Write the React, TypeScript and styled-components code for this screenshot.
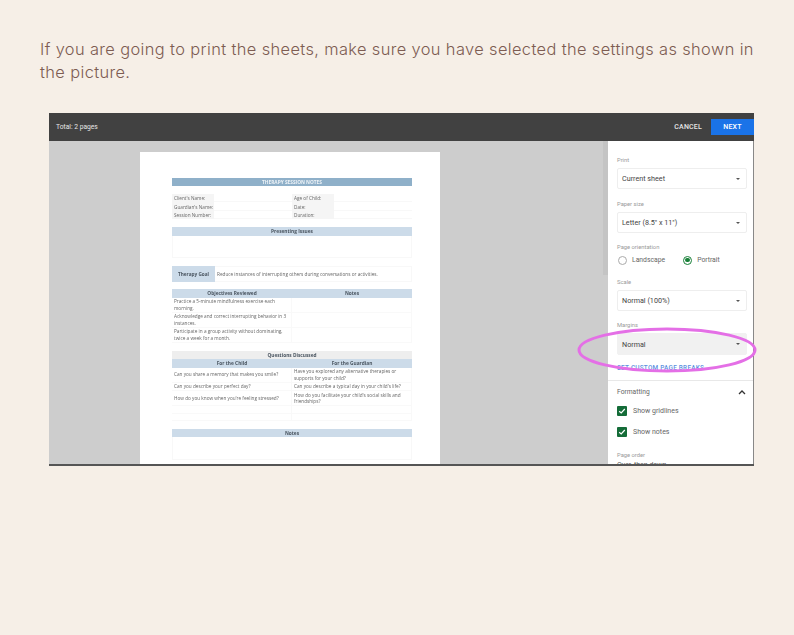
import React from 'react';
import styled, { createGlobalStyle } from 'styled-components';

const GlobalStyle = createGlobalStyle`
	html, body {
		margin: 0;
		padding: 0;
		background: #f6efe7;
	}
`;

const Page = styled.div`
	position: relative;
	width: 794px;
	height: 635px;
	overflow: hidden;
	padding: 38px 40px 0;
	box-sizing: border-box;
	background: #f6efe7;
`;

const Intro = styled.p`
	margin: 0;
	width: 730px;
	font-family: Inter, sans-serif;
	font-size: 16.4px;
	font-weight: 300;
	line-height: 23px;
	letter-spacing: 0.38px;
	color: #7d5c52;
`;

const Shot = styled.div`
	width: 705px;
	height: 353px;
	margin: 29px 0 0 9px;
	display: flex;
	flex-direction: column;
	overflow: hidden;
	background: #fff;
	border-bottom: 2px solid #555;
	box-sizing: border-box;
`;

const TopBar = styled.div`
	flex: 0 0 28px;
	display: flex;
	align-items: center;
	background: #414141;
	font-family: Roboto, sans-serif;
	font-size: 6.7px;
	color: #e6e6e6;
`;

const Total = styled.span`
	margin-left: 7px;
	flex: 1;
`;

const Cancel = styled.span`
	font-weight: 500;
	margin-right: 9px;
	font-size: 7px;
	letter-spacing: 0.2px;
`;

const Next = styled.span`
	width: 43px;
	height: 16px;
	display: flex;
	align-items: center;
	justify-content: center;
	background: #1a73e8;
	color: #fff;
	font-size: 7px;
	font-weight: 500;
	letter-spacing: 0.2px;
`;

const Body = styled.div`
	flex: 1;
	min-height: 0;
	display: flex;
`;

const Preview = styled.div`
	position: relative;
	width: 559px;
	padding: 11px 0 0 91px;
	box-sizing: border-box;
	background: #cdcdcd;
	overflow: hidden;
`;

const Scrollbar = styled.div`
	position: absolute;
	right: 0;
	top: 0;
	width: 5px;
	height: 134px;
	background: #c4c4c4;
`;

const Sheet = styled.div`
	width: 300px;
	height: 340px;
	padding: 25.5px 28px 0 32px;
	box-sizing: border-box;
	background: #fff;
	font-family: 'Open Sans', sans-serif;
	font-size: 4.7px;
	color: #666;
	filter: blur(0.3px);
`;

const Band = styled.div<{ $tone: 'title' | 'head' | 'grey'; $mt?: number }>`
	height: 8.5px;
	margin-top: ${p => p.$mt ?? 0}px;
	display: flex;
	align-items: center;
	justify-content: center;
	font-weight: 700;
	font-size: 4.8px;
	background: ${p => (p.$tone === 'title' ? '#8fb0c9' : p.$tone === 'head' ? '#ccdbe9' : '#eeeeee')};
	color: ${p => (p.$tone === 'title' ? '#eef3f7' : '#4a5560')};
`;

const InfoGrid = styled.div`
	display: grid;
	grid-template-columns: 42px 78px 42px 78px;
	grid-auto-rows: 8.4px;
	margin-top: 8px;
	margin-bottom: 8px;
`;

const InfoLabel = styled.div`
	display: flex;
	align-items: center;
	padding-left: 2px;
	background: #f5f5f5;
	white-space: nowrap;
`;

const InfoValue = styled.div`
	border-bottom: 1px solid #f8f8f8;
`;

const Blank = styled.div<{ $h: number }>`
	height: ${p => p.$h}px;
	border: 1px solid #f8f8f8;
	border-top: 0;
	box-sizing: border-box;
`;

const Goal = styled.div`
	display: flex;
	align-items: center;
	height: 16px;
	margin: 8px 0 7.5px;
	border: 1px solid #f8f8f8;
	border-left: 0;
	box-sizing: border-box;
`;

const GoalLabel = styled.div`
	width: 43px;
	height: 16px;
	margin-right: 2px;
	display: flex;
	align-items: center;
	justify-content: center;
	background: #ccdbe9;
	font-weight: 700;
	color: #4a5560;
`;

const Columns = styled.div`
	display: grid;
	grid-template-columns: 120px 120px;
`;

const ColHead = styled.div`
	height: 8.5px;
	display: flex;
	align-items: center;
	justify-content: center;
	background: #ccdbe9;
	font-weight: 700;
	font-size: 4.8px;
	color: #4a5560;
`;

const Cell = styled.div<{ $h: number }>`
	height: ${p => p.$h}px;
	display: flex;
	align-items: center;
	padding: 0 2px;
	line-height: 6.6px;
	box-sizing: border-box;
	border-bottom: 1px solid #f9f9f9;
	border-right: 1px solid #f9f9f9;
`;

const Panel = styled.div`
	position: relative;
	width: 146px;
	overflow: hidden;
	box-sizing: border-box;
	padding: 15px 6px 0 9px;
	font-family: Roboto, sans-serif;
	border-right: 1px solid #888;
`;

const FieldLabel = styled.div<{ $mt?: number }>`
	font-size: 5.8px;
	line-height: 8px;
	color: #9a9a9a;
	margin-top: ${p => p.$mt ?? 0}px;
`;

const Select = styled.div<{ $active?: boolean }>`
	height: ${p => (p.$active ? 22 : 21)}px;
	margin-top: 4px;
	padding: 0 6px 0 4px;
	display: flex;
	align-items: center;
	justify-content: space-between;
	border-radius: 2px;
	font-size: 7.2px;
	color: #444;
	background: ${p => (p.$active ? '#f1f1f1' : '#fff')};
	border: 1px solid ${p => (p.$active ? '#f1f1f1' : '#eeeeee')};
	box-sizing: border-box;
`;

const Caret = styled.span`
	width: 0;
	height: 0;
	border-left: 2.5px solid transparent;
	border-right: 2.5px solid transparent;
	border-top: 2.5px solid #555;
`;

const RadioRow = styled.div`
	display: flex;
	align-items: center;
	height: 12px;
	margin-top: 3px;
	font-size: 6.8px;
	color: #666;
`;

const Radio = styled.span<{ $on?: boolean }>`
	width: 9px;
	height: 9px;
	margin: 0 5px 0 1px;
	border-radius: 50%;
	box-sizing: border-box;
	border: 1px solid ${p => (p.$on ? '#188038' : '#aaa')};
	display: flex;
	align-items: center;
	justify-content: center;
	&::after {
		content: '';
		width: 4.5px;
		height: 4.5px;
		border-radius: 50%;
		background: ${p => (p.$on ? '#188038' : 'transparent')};
	}
`;

const RadioText = styled.span`
	margin-right: 17px;
`;

const PageBreaks = styled.div`
	margin-top: 9px;
	font-size: 6.4px;
	line-height: 8px;
	font-weight: 500;
	letter-spacing: 0.25px;
	color: #5b8fe0;
	white-space: nowrap;
`;

const Divider = styled.div`
	height: 1px;
	margin: 8px -6px 0 -9px;
	background: #e8e8e8;
`;

const SectionHead = styled.div`
	display: flex;
	align-items: center;
	justify-content: space-between;
	margin-top: 6px;
	padding-right: 1px;
	height: 10px;
	font-size: 6.7px;
	color: #666;
`;

const CheckRow = styled.div<{ $mt: number }>`
	display: flex;
	align-items: center;
	height: 10px;
	margin-top: ${p => p.$mt}px;
	font-size: 7px;
	color: #666;
`;

const CheckBox = styled.span`
	width: 10px;
	height: 10px;
	margin-right: 6px;
	display: flex;
	align-items: center;
	justify-content: center;
	background: #146c38;
	border-radius: 1px;
`;

const OrderValue = styled.div`
	display: flex;
	justify-content: space-between;
	align-items: center;
	padding-right: 9px;
	margin-top: 2px;
	font-size: 7px;
	line-height: 8px;
	color: #555;
`;

const Highlight = styled.svg`
	position: absolute;
	left: 574px;
	top: 325px;
	pointer-events: none;
`;

const questions: [string, string, number][] = [
	['Can you share a memory that makes you smile?', 'Have you explored any alternative therapies or supports for your child?', 15],
	['Can you describe your perfect day?', "Can you describe a typical day in your child's life?", 8.5],
	["How do you know when you're feeling stressed?", "How do you facilitate your child's social skills and friendships?", 15],
	['', '', 7.5],
	['', '', 7.5],
];

const Tick = () => (
	<svg width="8" height="8" viewBox="0 0 8 8">
		<path d="M1.2 4.2 L3.2 6 L6.8 2" fill="none" stroke="#fff" strokeWidth="1.2" />
	</svg>
);

export default function App() {
	return (
		<Page>
			<GlobalStyle />
			<Intro>If you are going to print the sheets, make sure you have selected the settings as shown in the picture.</Intro>
			<Shot>
				<TopBar>
					<Total>Total: 2 pages</Total>
					<Cancel>CANCEL</Cancel>
					<Next>NEXT</Next>
				</TopBar>
				<Body>
					<Preview>
						<Sheet>
							<Band $tone="title">THERAPY SESSION NOTES</Band>
							<InfoGrid>
								<InfoLabel>Client's Name:</InfoLabel>
								<InfoValue />
								<InfoLabel>Age of Child:</InfoLabel>
								<InfoValue />
								<InfoLabel>Guardian's Name:</InfoLabel>
								<InfoValue />
								<InfoLabel>Date:</InfoLabel>
								<InfoValue />
								<InfoLabel>Session Number:</InfoLabel>
								<InfoValue />
								<InfoLabel>Duration:</InfoLabel>
								<InfoValue />
							</InfoGrid>
							<Band $tone="head">Presenting Issues</Band>
							<Blank $h={22} />
							<Goal>
								<GoalLabel>Therapy Goal</GoalLabel>
								Reduce instances of interrupting others during conversations or activities.
							</Goal>
							<Columns>
								<ColHead>Objectives Reviewed</ColHead>
								<ColHead>Notes</ColHead>
								<Cell $h={15}>Practice a 5-minute mindfulness exercise each morning.</Cell>
								<Cell $h={15} />
								<Cell $h={15}>Acknowledge and correct interrupting behavior in 3 instances.</Cell>
								<Cell $h={15} />
								<Cell $h={15}>Participate in a group activity without dominating, twice a week for a month.</Cell>
								<Cell $h={15} />
							</Columns>
							<Band $tone="grey" $mt={8}>Questions Discussed</Band>
							<Columns>
								<ColHead>For the Child</ColHead>
								<ColHead>For the Guardian</ColHead>
								{questions.map(([child, guardian, h], i) => (
									<React.Fragment key={i}>
										<Cell $h={h}>{child}</Cell>
										<Cell $h={h}>{guardian}</Cell>
									</React.Fragment>
								))}
							</Columns>
							<Band $tone="head" $mt={7.5}>Notes</Band>
							<Blank $h={23} />
						</Sheet>
						<Scrollbar />
					</Preview>
					<Panel>
						<FieldLabel>Print</FieldLabel>
						<Select>
							Current sheet
							<Caret />
						</Select>
						<FieldLabel $mt={11}>Paper size</FieldLabel>
						<Select>
							Letter (8.5" x 11")
							<Caret />
						</Select>
						<FieldLabel $mt={10}>Page orientation</FieldLabel>
						<RadioRow>
							<Radio />
							<RadioText>Landscape</RadioText>
							<Radio $on />
							<span>Portrait</span>
						</RadioRow>
						<FieldLabel $mt={12}>Scale</FieldLabel>
						<Select>
							Normal (100%)
							<Caret />
						</Select>
						<FieldLabel $mt={10}>Margins</FieldLabel>
						<Select $active>
							Normal
							<Caret />
						</Select>
						<PageBreaks>SET CUSTOM PAGE BREAKS</PageBreaks>
						<Divider />
						<SectionHead>
							Formatting
							<svg width="8" height="6" viewBox="0 0 8 6">
								<path d="M1 5 L4 2 L7 5" fill="none" stroke="#333" strokeWidth="1.3" />
							</svg>
						</SectionHead>
						<CheckRow $mt={9}>
							<CheckBox>
								<Tick />
							</CheckBox>
							Show gridlines
						</CheckRow>
						<CheckRow $mt={11}>
							<CheckBox>
								<Tick />
							</CheckBox>
							Show notes
						</CheckRow>
						<FieldLabel $mt={14}>Page order</FieldLabel>
						<OrderValue>
							Over, then down
							<Caret />
						</OrderValue>
					</Panel>
				</Body>
			</Shot>
			<Highlight width="186" height="50" viewBox="0 0 186 50">
				<ellipse cx="93" cy="25" rx="88" ry="21" fill="none" stroke="#e46fe6" strokeWidth="3" />
			</Highlight>
		</Page>
	);
}
